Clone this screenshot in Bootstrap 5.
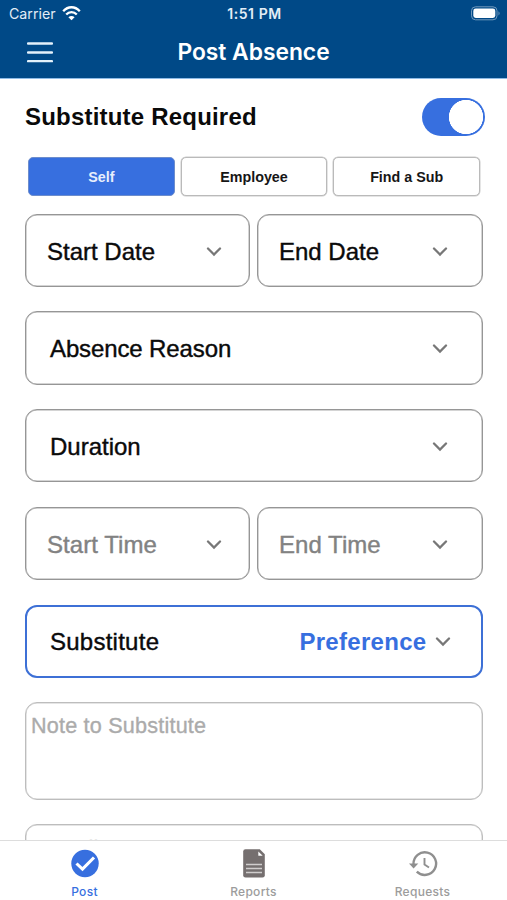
<!DOCTYPE html>
<html lang="en">
<head>
<meta charset="utf-8">
<meta name="viewport" content="width=device-width, initial-scale=1">
<title>Post Absence</title>
<link href="https://cdn.jsdelivr.net/npm/bootstrap@5.3.0/dist/css/bootstrap.min.css" rel="stylesheet">
<style>
:root{--brand:#376fdf;--navy:#004987}
html,body{height:100%}
body{font-family:"Liberation Sans",Arial,sans-serif;color:#0a0a0a;background:#fff;overflow:hidden}
.app-screen{height:900px}
.app-top{background:var(--navy);height:79px;border-bottom:1px solid #8ebbe6;font-family:Inter,sans-serif}
.status-line{height:27px;padding:0 6px 0 9px;font-size:14.2px;line-height:27px;color:#e3edf6}
.status-line .clock{font-weight:600;font-size:14px;letter-spacing:.55px;margin-right:1px}
.wifi{margin-left:-2px}
.title-line{height:51px;padding:0 27px}
.title-line h1{font-size:22.8px;font-weight:600;line-height:49px;letter-spacing:0}
.form-area{padding:0 24.5px 0 25px}
.sub-row{height:76px}
.sub-title{font-size:24px;font-weight:700;letter-spacing:.2px;line-height:1}
.form-check-input.sub-switch{width:63px;height:38px;margin:0 -2.5px 0 0;float:none;border:0;background-color:var(--brand);border-radius:19px}
.form-check-input.sub-switch,.form-check-input.sub-switch:checked{background-image:radial-gradient(circle at 44px 19px,#fff 16.8px,transparent 17.4px);background-size:100% 100%;background-position:0 0}
.seg-row{height:39px;margin:2px 2.5px 0 3px;gap:6px}
.seg-row .btn{flex:1 1 0;padding:2px 0 0;line-height:1;font-size:14.3px;font-weight:700;color:#161616;border:1px solid #bababa;box-shadow:0 0 0 .5px #ccc;border-radius:5px;background:#fff}
.seg-row .btn.active{background:var(--brand);border-color:#6d8dcc;color:#e7eefc;box-shadow:none}
.fields{margin-top:17.5px;gap:24.4px}
.pair{gap:6.5px}
.pick{height:73.4px;border:1px solid #969696;box-shadow:inset 0 0 0 .5px #aaa;border-radius:12px;font-size:24px;line-height:1;padding:3px 34px 0 24px;background:#fff;color:inherit;-webkit-text-stroke:.4px currentColor}
.pick.reason-pick{letter-spacing:-.12px}
.pair .pick{padding-left:21px;padding-right:27px;width:50%}
.pair .pick+.pick{padding-right:34px}
.pick.muted-pick{color:#828282;letter-spacing:.05px}
.pick.chosen{border:2px solid #3d70d6;box-shadow:none;padding:2px 30px 0 23px}
.chosen span{letter-spacing:.25px}
.chosen b{color:var(--brand);-webkit-text-stroke:0;letter-spacing:.3px}
.chev{width:16px;height:10px;flex:none}
.memo{height:97.6px;border:1px solid #bdbdbd;box-shadow:inset 0 0 0 .5px #ccc;border-radius:12px;padding:10px 5px;font-size:21.6px;letter-spacing:.2px;line-height:26px;resize:none}
.memo+.memo{padding-top:11px}
.memo::placeholder{color:#ababab;-webkit-text-stroke:.35px #ababab;opacity:1}
.tab-strip{height:60px;border-top:1px solid #ddd;background:#fff;font-family:Inter,sans-serif}
.tab-strip .nav-link{padding:7px 0 0;font-size:12px;font-weight:500;line-height:15px;letter-spacing:.3px;color:#9c9c9c}
.tab-strip .nav-link.active{color:var(--brand)}
.tab-strip svg{width:32px;height:32px;margin-bottom:4px}
</style>
</head>
<body>
<div class="app-screen d-flex flex-column overflow-hidden">
<header class="app-top flex-shrink-0">
 <div class="status-line row g-0">
  <div class="col d-flex align-items-center gap-2">
   <span>Carrier</span>
   <svg class="wifi" width="19" height="15" viewBox="0 0 19 15"><g fill="none" stroke="#fff" stroke-width="2.3"><path d="M1.2 5.2C6-.1 13-.1 17.8 5.2"/><path d="M4.2 8.5c3-3.2 7.6-3.2 10.6 0"/></g><path d="M9.5 14.2 6.4 11.2c1.8-1.7 4.4-1.7 6.2 0z" fill="#fff"/></svg>
  </div>
  <div class="col-auto clock">1:51 PM</div>
  <div class="col d-flex align-items-center justify-content-end">
   <svg width="31" height="15" viewBox="0 0 31 15"><rect x="1.5" y=".8" width="25.5" height="13" rx="4" fill="none" stroke="#7199bd"/><rect x="3.3" y="2.6" width="22" height="9.4" rx="2.4" fill="#fff"/><path d="M28.5 5.2q2.2 2.1 0 4.2z" fill="#7199bd"/></svg>
  </div>
 </div>
 <div class="title-line row g-0">
  <div class="col d-flex align-items-center"><svg width="26" height="22" viewBox="0 0 26 22"><path d="M1 1.5h24M1 10.5h24M1 19.2h24" stroke="#e3f1fb" stroke-width="2.3" stroke-linecap="round"/></svg></div>
  <h1 class="col-auto m-0 text-white">Post Absence</h1>
  <div class="col"></div>
 </div>
</header>
<main class="form-area flex-grow-1 overflow-hidden">
 <div class="sub-row d-flex align-items-center justify-content-between">
  <span class="sub-title">Substitute Required</span>
  <div class="form-switch p-0 d-flex"><input class="form-check-input sub-switch" type="checkbox" role="switch" checked aria-label="Substitute Required"></div>
 </div>
 <div class="seg-row d-flex">
  <button class="btn active">Self</button><button class="btn">Employee</button><button class="btn">Find a Sub</button>
 </div>
 <div class="fields d-flex flex-column">
  <div class="pair d-flex">
   <button class="pick d-flex align-items-center justify-content-between"><span>Start Date</span><svg class="chev" viewBox="0 0 16 10"><path d="M2 1.5 8 7.5l6-6" fill="none" stroke="#777" stroke-width="2.3" stroke-linecap="round"/></svg></button>
   <button class="pick d-flex align-items-center justify-content-between"><span>End Date</span><svg class="chev" viewBox="0 0 16 10"><path d="M2 1.5 8 7.5l6-6" fill="none" stroke="#777" stroke-width="2.3" stroke-linecap="round"/></svg></button>
  </div>
  <button class="pick reason-pick d-flex align-items-center justify-content-between"><span>Absence Reason</span><svg class="chev" viewBox="0 0 16 10"><path d="M2 1.5 8 7.5l6-6" fill="none" stroke="#777" stroke-width="2.3" stroke-linecap="round"/></svg></button>
  <button class="pick d-flex align-items-center justify-content-between"><span>Duration</span><svg class="chev" viewBox="0 0 16 10"><path d="M2 1.5 8 7.5l6-6" fill="none" stroke="#777" stroke-width="2.3" stroke-linecap="round"/></svg></button>
  <div class="pair d-flex">
   <button class="pick muted-pick d-flex align-items-center justify-content-between"><span>Start Time</span><svg class="chev" viewBox="0 0 16 10"><path d="M2 1.5 8 7.5l6-6" fill="none" stroke="#777" stroke-width="2.3" stroke-linecap="round"/></svg></button>
   <button class="pick muted-pick d-flex align-items-center justify-content-between"><span>End Time</span><svg class="chev" viewBox="0 0 16 10"><path d="M2 1.5 8 7.5l6-6" fill="none" stroke="#777" stroke-width="2.3" stroke-linecap="round"/></svg></button>
  </div>
  <button class="pick chosen d-flex align-items-center"><span class="me-auto">Substitute</span><b class="me-2">Preference</b><svg class="chev" viewBox="0 0 16 10"><path d="M2 1.5 8 7.5l6-6" fill="none" stroke="#777" stroke-width="2.3" stroke-linecap="round"/></svg></button>
  <textarea class="form-control memo" placeholder="Note to Substitute"></textarea>
  <textarea class="form-control memo" placeholder="Payroll Note"></textarea>
 </div>
</main>
<nav class="tab-strip nav nav-fill flex-nowrap flex-shrink-0">
 <a class="nav-link active d-flex flex-column align-items-center w-100" href="#"><svg viewBox="0 0 32 32"><circle cx="16" cy="15.5" r="13.7" fill="#376fdf"/><path d="m7.5 15.5 6 5.7L25 9.5" fill="none" stroke="#fff" stroke-width="3.1"/></svg>Post</a>
 <a class="nav-link d-flex flex-column align-items-center w-100" href="#"><svg viewBox="0 0 32 32"><path d="M7.5 1.2h14.3l5 5v21.1a2.3 2.3 0 0 1-2.3 2.3h-17a2.3 2.3 0 0 1-2.3-2.3V3.5a2.3 2.3 0 0 1 2.3-2.3z" fill="#756f6f"/><path d="M20.3 3.5v4.2h4.4z" fill="#fff"/><path d="M8 16.5h16M8 20.5h16M8 24.5h16" stroke="#d0cdcd" stroke-width="1.3"/></svg>Reports</a>
 <a class="nav-link d-flex flex-column align-items-center w-100" href="#"><svg viewBox="0 0 32 32"><path d="M6.5 16A11.3 11.3 0 1 1 9.8 23.6" fill="none" stroke="#8f8f8f" stroke-width="2.4"/><path d="M2 15.5h9.3l-4.7 5z" fill="#8f8f8f"/><path d="M17.5 10v6.5l4.5 3" fill="none" stroke="#8f8f8f" stroke-width="1.9"/></svg>Requests</a>
</nav>
</div>
<script src="https://cdn.jsdelivr.net/npm/bootstrap@5.3.0/dist/js/bootstrap.bundle.min.js"></script>
</body>
</html>
